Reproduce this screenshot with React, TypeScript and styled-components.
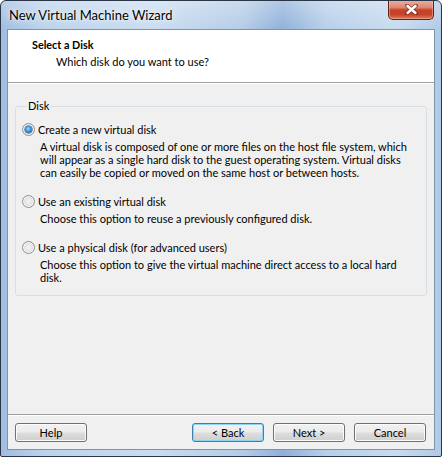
import React from "react";
import styled, { createGlobalStyle } from "styled-components";

const Global = createGlobalStyle`
  html, body { margin: 0; padding: 0; background: #ffffff; }
  body { font-family: Lato, "Noto Sans", sans-serif; }
  * { box-sizing: border-box; }
`;

const Window = styled.div`
  width: 442px;
  height: 457px;
  border: 1px solid #2a3645;
  border-radius: 6px 6px 2px 2px;
  background:
    linear-gradient(180deg, rgba(255,255,255,0.3) 0%, rgba(255,255,255,0) 30px),
    linear-gradient(90deg, #9fbde0 0%, #bcd3ec 10%, #cadcf0 35%, #b4cbe7 55%, #8fb0d9 64%, #b7cfea 74%, #c8dbef 90%, #b0c9e6 100%);
  display: flex;
  flex-direction: column;
  overflow: hidden;
`;

const TitleBar = styled.div`
  height: 28px;
  display: flex;
  align-items: flex-start;
  justify-content: space-between;
  padding: 0 7px 0 7px;
`;

const TitleText = styled.div`
  font-family: Lato, "Noto Sans", sans-serif;
  font-size: 13px;
  line-height: 18px;
  color: #000;
  padding-top: 5px;
  padding-left: 1px;
  text-shadow: 0 0 6px rgba(255,255,255,0.9), 0 0 2px rgba(255,255,255,0.9);
`;

const CloseButton = styled.div`
  width: 46px;
  height: 20px;
  margin-top: -1px;
  border: 1px solid #5a2418;
  border-top: none;
  border-radius: 0 0 5px 5px;
  background: linear-gradient(180deg, #eab3a4 0%, #dc8670 40%, #c8432a 52%, #c54127 75%, #dc7d5c 100%);
  box-shadow: inset 0 0 0 1px rgba(255, 200, 180, 0.45);
  display: flex;
  align-items: center;
  justify-content: center;
`;

const Client = styled.div`
  flex: 1;
  margin: 0 6px 6px 6px;
  border: 1px solid #7f93ab;
  background: #f0f0f0;
  display: flex;
  flex-direction: column;
`;

const Header = styled.div`
  height: 52px;
  background: #ffffff;
  padding: 7px 0 0 24px;
`;

const HeaderTitle = styled.div`
  font-size: 10.8px;
  font-weight: 700;
  line-height: 15px;
  color: #000;
`;

const HeaderSubtitle = styled.div`
  font-size: 11px;
  line-height: 15px;
  color: #000;
  margin-top: 2px;
  padding-left: 24px;
`;

const Etched = styled.div`
  height: 2px;
  border-top: 1px solid #a0a0a0;
  border-bottom: 1px solid #ffffff;
`;

const Body = styled.div`
  flex: 1;
  padding: 15px 7px 0 7px;
`;

const Group = styled.fieldset`
  margin: 0;
  padding: 8px 0 11px 6px;
  border: 1px solid #d5dfe5;
  border-radius: 3px;
  min-width: 0;
`;

const Legend = styled.legend`
  font-size: 11px;
  line-height: 14px;
  padding: 0 1px;
  margin-left: 5px;
  color: #000;
`;

const Options = styled.div`
  display: flex;
  flex-direction: column;
  gap: 14px;
`;

const Option = styled.div`
  display: flex;
  flex-direction: column;
`;

const RadioRow = styled.div`
  height: 16px;
  display: flex;
  align-items: center;
  gap: 3px;
  font-size: 11px;
  color: #000;
`;

const Radio = styled.span<{ $checked?: boolean }>`
  width: 13px;
  height: 13px;
  border-radius: 50%;
  border: 1px solid #8e8f8f;
  background: radial-gradient(circle at 50% 50%, #f4f4f4 0%, #e2e2e2 55%, #cfcfcf 100%);
  box-shadow: inset 0 0 0 1px #f6f6f6;
  display: flex;
  align-items: center;
  justify-content: center;
  flex: none;
  &::after {
    content: "";
    display: ${(p) => (p.$checked ? "block" : "none")};
    width: 7px;
    height: 7px;
    border-radius: 50%;
    background: radial-gradient(circle at 45% 40%, #9fdcfb 0%, #3b93d6 45%, #1a4f8f 100%);
    box-shadow: 0 0 0 0.5px #184a80;
  }
`;

const Description = styled.div`
  margin-top: 3px;
  padding-left: 18px;
  font-size: 11px;
  line-height: 13px;
  color: #000;
  white-space: nowrap;
`;

const Line = styled.span`
  display: block;
`;

const Footer = styled.div`
  height: 35px;
  display: flex;
  flex-direction: column;
`;

const ButtonBar = styled.div`
  flex: 1;
  display: flex;
  justify-content: space-between;
  align-items: flex-start;
  padding: 7px 8px 0 7px;
`;

const ButtonGroup = styled.div`
  display: flex;
  gap: 9px;
`;

const Button = styled.div<{ $default?: boolean }>`
  width: 72px;
  height: 19px;
  border: 1px solid ${(p) => (p.$default ? "#3c7fb1" : "#707070")};
  border-radius: 3px;
  background: linear-gradient(180deg, #f2f2f2 0%, #ebebeb 48%, #dddddd 52%, #cfcfcf 100%);
  box-shadow: inset 0 0 0 1px ${(p) => (p.$default ? "#8fd5f3" : "#fbfbfb")};
  font-size: 11px;
  line-height: 17px;
  text-align: center;
  color: #000;
`;

const options = [
  {
    label: "Create a new virtual disk",
    checked: true,
    lines: [
      "A virtual disk is composed of one or more files on the host file system, which",
      "will appear as a single hard disk to the guest operating system. Virtual disks",
      "can easily be copied or moved on the same host or between hosts.",
    ],
  },
  {
    label: "Use an existing virtual disk",
    checked: false,
    lines: ["Choose this option to reuse a previously configured disk."],
  },
  {
    label: "Use a physical disk (for advanced users)",
    checked: false,
    lines: [
      "Choose this option to give the virtual machine direct access to a local hard",
      "disk.",
    ],
  },
];

export default function App() {
  return (
    <>
      <Global />
      <Window>
        <TitleBar>
          <TitleText>New Virtual Machine Wizard</TitleText>
          <CloseButton>
            <svg width="13" height="11" viewBox="0 0 13 11">
              <path
                d="M2 1.5 L11 9.5 M11 1.5 L2 9.5"
                stroke="#4a1a10"
                strokeWidth="4"
                strokeLinecap="round"
                fill="none"
                opacity="0.55"
              />
              <path
                d="M2.5 2 L10.5 9 M10.5 2 L2.5 9"
                stroke="#ffffff"
                strokeWidth="2.4"
                strokeLinecap="round"
                fill="none"
              />
            </svg>
          </CloseButton>
        </TitleBar>
        <Client>
          <Header>
            <HeaderTitle>Select a Disk</HeaderTitle>
            <HeaderSubtitle>Which disk do you want to use?</HeaderSubtitle>
          </Header>
          <Etched />
          <Body>
            <Group>
              <Legend>Disk</Legend>
              <Options>
                {options.map((o) => (
                  <Option key={o.label}>
                    <RadioRow>
                      <Radio $checked={o.checked} />
                      {o.label}
                    </RadioRow>
                    <Description>
                      {o.lines.map((l) => (
                        <Line key={l}>{l}</Line>
                      ))}
                    </Description>
                  </Option>
                ))}
              </Options>
            </Group>
          </Body>
          <Footer>
            <Etched />
            <ButtonBar>
              <Button>Help</Button>
              <ButtonGroup>
                <Button $default>&lt; Back</Button>
                <Button>Next &gt;</Button>
                <Button>Cancel</Button>
              </ButtonGroup>
            </ButtonBar>
          </Footer>
        </Client>
      </Window>
    </>
  );
}
